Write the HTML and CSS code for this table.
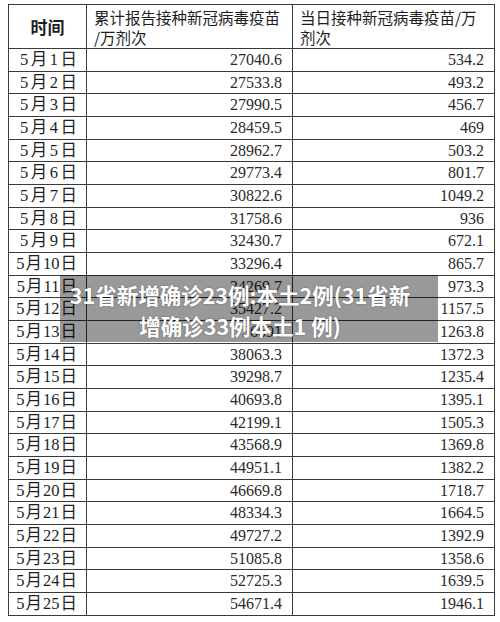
FILE: index.html
```html
<!DOCTYPE html>
<html lang="zh">
<head>
<meta charset="utf-8">
<link rel="stylesheet" href="styles.css">
</head>
<body>
<div class="wrap">
<table class="tbl">
<colgroup><col class="c1"><col class="c2"><col class="c3"></colgroup>
<thead>
<tr class="hd"><th class="cell h-time">时间</th><th class="cell h-txt">累计报告接种新冠病毒疫苗<br>/万剂次</th><th class="cell h-txt">当日接种新冠病毒疫苗/万<br>剂次</th></tr>
</thead>
<tbody>
<tr class="row"><td class="cell d"><div class="dt"><span>5</span><span>月</span><span>1</span><span>日</span></div></td><td class="cell n">27040.6</td><td class="cell n">534.2</td></tr>
<tr class="row"><td class="cell d"><div class="dt"><span>5</span><span>月</span><span>2</span><span>日</span></div></td><td class="cell n">27533.8</td><td class="cell n">493.2</td></tr>
<tr class="row"><td class="cell d"><div class="dt"><span>5</span><span>月</span><span>3</span><span>日</span></div></td><td class="cell n">27990.5</td><td class="cell n">456.7</td></tr>
<tr class="row"><td class="cell d"><div class="dt"><span>5</span><span>月</span><span>4</span><span>日</span></div></td><td class="cell n">28459.5</td><td class="cell n">469</td></tr>
<tr class="row"><td class="cell d"><div class="dt"><span>5</span><span>月</span><span>5</span><span>日</span></div></td><td class="cell n">28962.7</td><td class="cell n">503.2</td></tr>
<tr class="row"><td class="cell d"><div class="dt"><span>5</span><span>月</span><span>6</span><span>日</span></div></td><td class="cell n">29773.4</td><td class="cell n">801.7</td></tr>
<tr class="row"><td class="cell d"><div class="dt"><span>5</span><span>月</span><span>7</span><span>日</span></div></td><td class="cell n">30822.6</td><td class="cell n">1049.2</td></tr>
<tr class="row"><td class="cell d"><div class="dt"><span>5</span><span>月</span><span>8</span><span>日</span></div></td><td class="cell n">31758.6</td><td class="cell n">936</td></tr>
<tr class="row"><td class="cell d"><div class="dt"><span>5</span><span>月</span><span>9</span><span>日</span></div></td><td class="cell n">32430.7</td><td class="cell n">672.1</td></tr>
<tr class="row"><td class="cell d"><div class="dt"><span>5</span><span>月</span><span>10</span><span>日</span></div></td><td class="cell n">33296.4</td><td class="cell n">865.7</td></tr>
<tr class="row"><td class="cell d"><div class="dt"><span>5</span><span>月</span><span>11</span><span>日</span></div></td><td class="cell n">34269.7</td><td class="cell n">973.3</td></tr>
<tr class="row"><td class="cell d"><div class="dt"><span>5</span><span>月</span><span>12</span><span>日</span></div></td><td class="cell n">35427.2</td><td class="cell n">1157.5</td></tr>
<tr class="row"><td class="cell d"><div class="dt"><span>5</span><span>月</span><span>13</span><span>日</span></div></td><td class="cell n">36691</td><td class="cell n">1263.8</td></tr>
<tr class="row"><td class="cell d"><div class="dt"><span>5</span><span>月</span><span>14</span><span>日</span></div></td><td class="cell n">38063.3</td><td class="cell n">1372.3</td></tr>
<tr class="row"><td class="cell d"><div class="dt"><span>5</span><span>月</span><span>15</span><span>日</span></div></td><td class="cell n">39298.7</td><td class="cell n">1235.4</td></tr>
<tr class="row"><td class="cell d"><div class="dt"><span>5</span><span>月</span><span>16</span><span>日</span></div></td><td class="cell n">40693.8</td><td class="cell n">1395.1</td></tr>
<tr class="row"><td class="cell d"><div class="dt"><span>5</span><span>月</span><span>17</span><span>日</span></div></td><td class="cell n">42199.1</td><td class="cell n">1505.3</td></tr>
<tr class="row"><td class="cell d"><div class="dt"><span>5</span><span>月</span><span>18</span><span>日</span></div></td><td class="cell n">43568.9</td><td class="cell n">1369.8</td></tr>
<tr class="row"><td class="cell d"><div class="dt"><span>5</span><span>月</span><span>19</span><span>日</span></div></td><td class="cell n">44951.1</td><td class="cell n">1382.2</td></tr>
<tr class="row"><td class="cell d"><div class="dt"><span>5</span><span>月</span><span>20</span><span>日</span></div></td><td class="cell n">46669.8</td><td class="cell n">1718.7</td></tr>
<tr class="row"><td class="cell d"><div class="dt"><span>5</span><span>月</span><span>21</span><span>日</span></div></td><td class="cell n">48334.3</td><td class="cell n">1664.5</td></tr>
<tr class="row"><td class="cell d"><div class="dt"><span>5</span><span>月</span><span>22</span><span>日</span></div></td><td class="cell n">49727.2</td><td class="cell n">1392.9</td></tr>
<tr class="row"><td class="cell d"><div class="dt"><span>5</span><span>月</span><span>23</span><span>日</span></div></td><td class="cell n">51085.8</td><td class="cell n">1358.6</td></tr>
<tr class="row"><td class="cell d"><div class="dt"><span>5</span><span>月</span><span>24</span><span>日</span></div></td><td class="cell n">52725.3</td><td class="cell n">1639.5</td></tr>
<tr class="row"><td class="cell d"><div class="dt"><span>5</span><span>月</span><span>25</span><span>日</span></div></td><td class="cell n">54671.4</td><td class="cell n">1946.1</td></tr>
</tbody>
</table>
<div class="overlay"></div>
<div class="caption">31省新增确诊23例:本土2例(31省新<br>增确诊33例本土1 例)</div>
</div>
</body>
</html>
```
FILE: styles.css
```css
html, body { margin: 0; padding: 0; background: #fff; }
body { font-family: "Liberation Serif", "Noto Sans CJK SC", serif; color: #1e1e1e; }
.wrap { position: relative; width: 500px; height: 622px; padding: 4px 0 0 8px; box-sizing: border-box; }
.tbl { border-collapse: collapse; table-layout: fixed; width: 486px; }
.c1 { width: 78px; }
.c2 { width: 206px; }
.c3 { width: 202px; }
.cell { border: 1.4px solid #3a3a3a; padding: 0; }
.hd { height: 44px; }
.cell.h-time { font-family: "Noto Sans CJK SC", sans-serif; font-weight: 700; font-size: 17px; text-align: center; }
.cell.h-txt { font-family: "Noto Sans CJK SC", sans-serif; font-weight: 400; font-size: 15.5px; line-height: 20px; text-align: left; padding: 0 0 0 7px; vertical-align: middle; }
.row { height: 22.68px; }
.cell.d { padding: 0 9px 0 0; text-align: right; }
.dt { display: inline-flex; justify-content: space-between; align-items: center; gap: 1px; min-width: 57px; font-size: 16.5px; line-height: 20px; vertical-align: middle; font-family: "Liberation Serif", "Noto Sans CJK SC", serif; }
.cell.n { text-align: right; padding: 0 10px 0 0; font-size: 16px; line-height: 20px; color: #2a2a2a; }
.overlay { position: absolute; left: 60px; top: 275px; width: 378px; height: 67px; background: rgba(0,0,0,0.4); }
.caption { position: absolute; left: 40px; top: 279px; width: 400px; text-align: center; font-family: "Noto Sans CJK SC", sans-serif; font-weight: 700; font-size: 21.5px; line-height: 31px; color: #fff; text-shadow: 0 0 2px rgba(0,0,0,0.35); }
```
